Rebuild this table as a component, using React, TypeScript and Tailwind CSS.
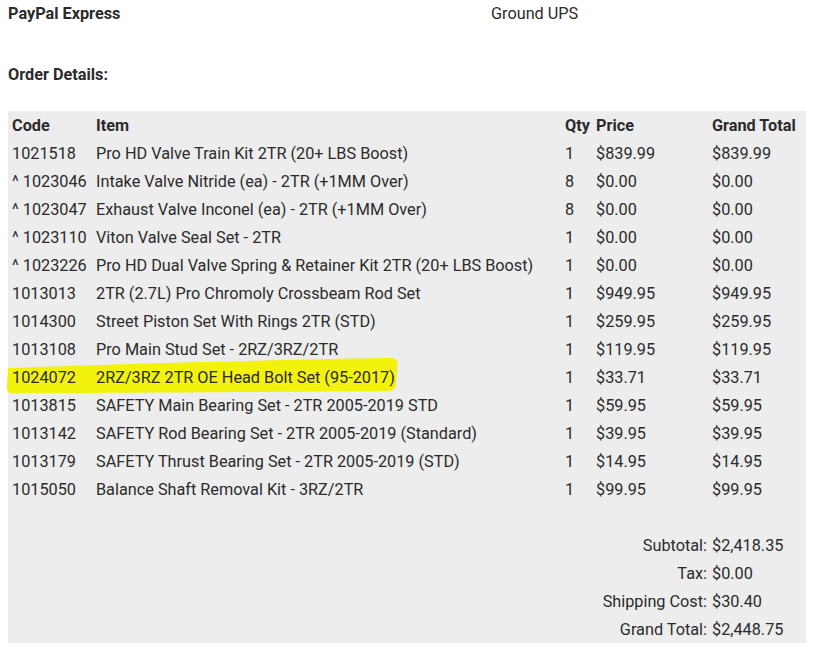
const rows: [string, string, string, string, string][] = [
  ['1021518', 'Pro HD Valve Train Kit 2TR (20+ LBS Boost)', '1', '$839.99', '$839.99'],
  ['^ 1023046', 'Intake Valve Nitride (ea) - 2TR (+1MM Over)', '8', '$0.00', '$0.00'],
  ['^ 1023047', 'Exhaust Valve Inconel (ea) - 2TR (+1MM Over)', '8', '$0.00', '$0.00'],
  ['^ 1023110', 'Viton Valve Seal Set - 2TR', '1', '$0.00', '$0.00'],
  ['^ 1023226', 'Pro HD Dual Valve Spring & Retainer Kit 2TR (20+ LBS Boost)', '1', '$0.00', '$0.00'],
  ['1013013', '2TR (2.7L) Pro Chromoly Crossbeam Rod Set', '1', '$949.95', '$949.95'],
  ['1014300', 'Street Piston Set With Rings 2TR (STD)', '1', '$259.95', '$259.95'],
  ['1013108', 'Pro Main Stud Set - 2RZ/3RZ/2TR', '1', '$119.95', '$119.95'],
  ['1024072', '2RZ/3RZ 2TR OE Head Bolt Set (95-2017)', '1', '$33.71', '$33.71'],
  ['1013815', 'SAFETY Main Bearing Set - 2TR 2005-2019 STD', '1', '$59.95', '$59.95'],
  ['1013142', 'SAFETY Rod Bearing Set - 2TR 2005-2019 (Standard)', '1', '$39.95', '$39.95'],
  ['1013179', 'SAFETY Thrust Bearing Set - 2TR 2005-2019 (STD)', '1', '$14.95', '$14.95'],
  ['1015050', 'Balance Shaft Removal Kit - 3RZ/2TR', '1', '$99.95', '$99.95'],
];

const totals: [string, string][] = [
  ['Subtotal:', '$2,418.35'],
  ['Tax:', '$0.00'],
  ['Shipping Cost:', '$30.40'],
  ['Grand Total:', '$2,448.75'],
];

export default function App() {
  return (
    <div className="min-h-[648px] bg-white text-[16.25px] text-[#2b2b2b] font-['Roboto','Liberation_Sans',sans-serif] px-2">
      {/* payment / shipping */}
      <div className="flex pt-[5px] leading-[18px]">
        <div className="w-[483px] font-bold">PayPal Express</div>
        <div>Ground UPS</div>
      </div>

      <div className="mt-[43px] leading-[18px] font-bold">Order Details:</div>

      {/* order table */}
      <div className="relative mt-[27px] w-[798px] bg-[#ededed]">
        <svg
          className="absolute left-[-2px] top-[245px] pointer-events-none"
          width="394"
          height="40"
          viewBox="0 0 394 40"
        >
          <path
            d="M2 12 C 80 9, 250 4, 384 2 C 392 2, 392 6, 391 12 L 390 30 C 389 34, 386 35, 380 35 C 250 36, 90 37, 6 37 C 1 37, 1 34, 1 30 Z"
            fill="#f2f20c"
          />
        </svg>
        <table className="relative w-[798px] table-fixed border-collapse leading-[26px]">
          <colgroup>
            <col className="w-[84px]" />
            <col className="w-[469px]" />
            <col className="w-[31px]" />
            <col className="w-[116px]" />
            <col className="w-[98px]" />
          </colgroup>
          <thead>
            <tr className="h-[28px] font-bold text-left">
              <th className="p-0 pl-1 pt-[2px]">Code</th>
              <th className="p-0 pl-1 pt-[2px]">Item</th>
              <th className="p-0 pl-1 pt-[2px]">Qty</th>
              <th className="p-0 pl-1 pt-[2px]">Price</th>
              <th className="p-0 pl-1 pt-[2px] whitespace-nowrap">Grand Total</th>
            </tr>
          </thead>
          <tbody>
            {rows.map(([code, item, qty, price, total]) => (
              <tr key={code} className="h-[28px]">
                <td className="p-0 pl-1 pt-[2px] whitespace-nowrap">{code}</td>
                <td className="p-0 pl-1 pt-[2px] whitespace-nowrap">{item}</td>
                <td className="p-0 pl-1 pt-[2px]">{qty}</td>
                <td className="p-0 pl-1 pt-[2px]">{price}</td>
                <td className="p-0 pl-1 pt-[2px]">{total}</td>
              </tr>
            ))}
            <tr className="h-[28px]">
              <td colSpan={5} />
            </tr>
            {totals.map(([label, value]) => (
              <tr key={label} className="h-[28px]">
                <td colSpan={4} className="p-0 pr-[1px] pt-[2px] text-right">
                  {label}
                </td>
                <td className="p-0 pl-1 pt-[2px]">{value}</td>
              </tr>
            ))}
          </tbody>
        </table>
      </div>
    </div>
  );
}
